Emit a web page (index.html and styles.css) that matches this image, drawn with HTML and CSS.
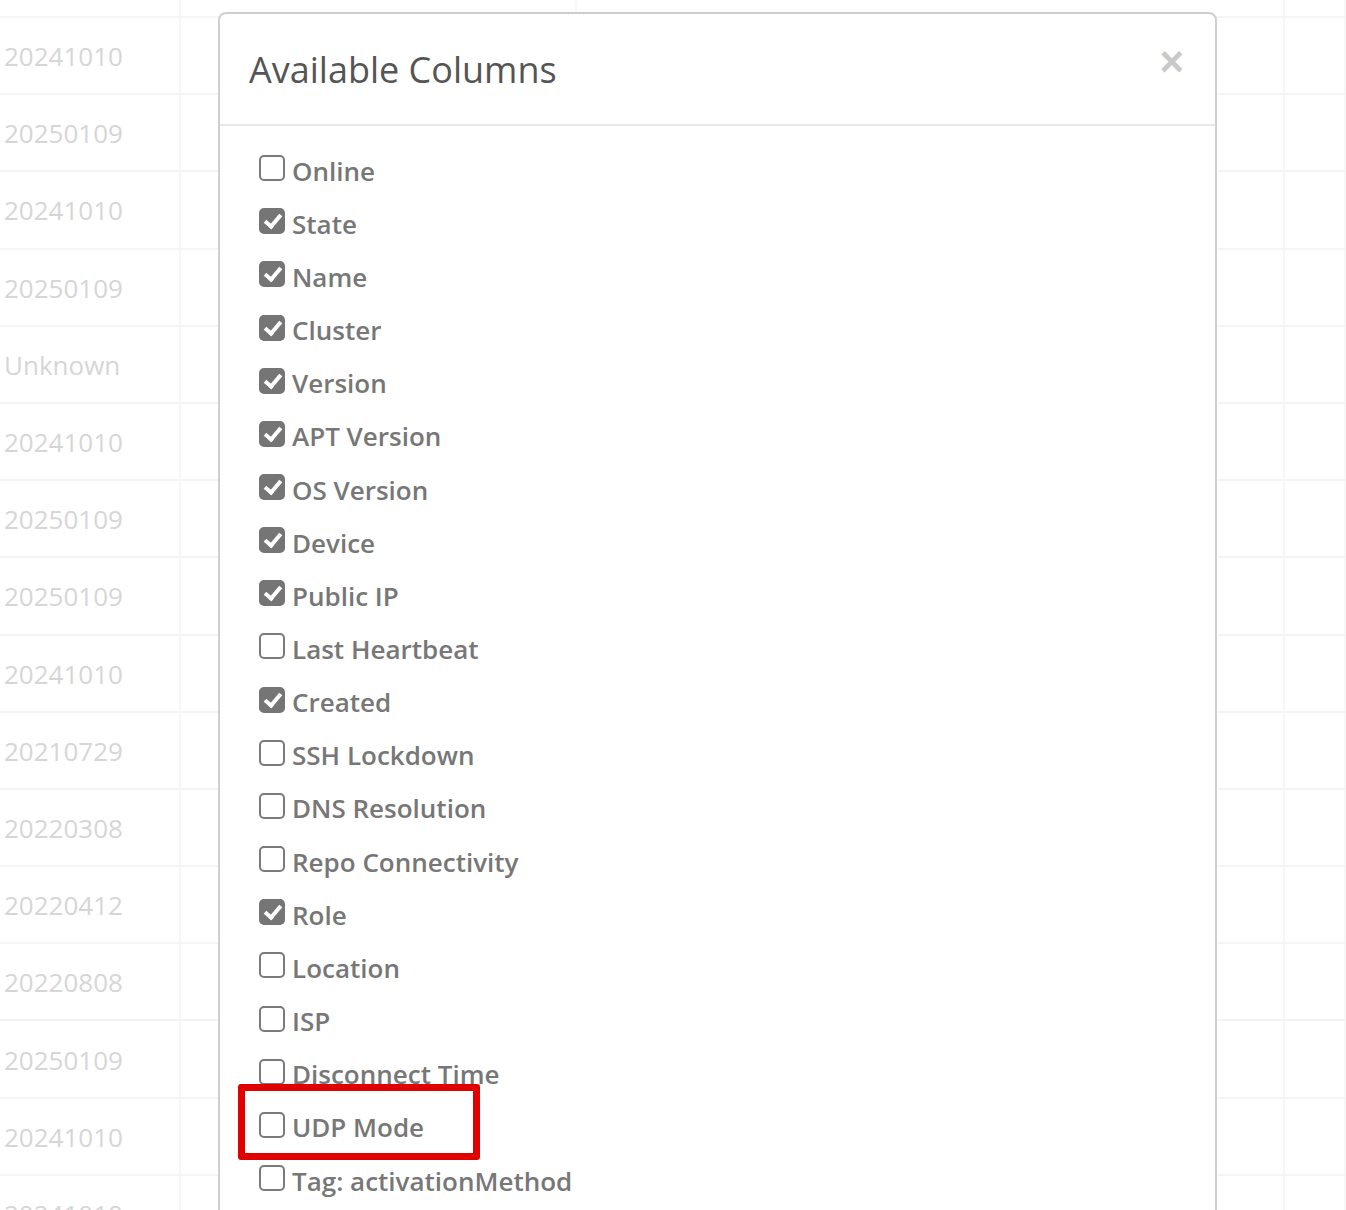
FILE: index.html
```html
<!DOCTYPE html>
<html>
<head>
<meta charset="utf-8">
<link rel="stylesheet" href="styles.css">
</head>
<body>
<div class="page">
  <div class="grid">
    <div class="row top"><div class="c1"></div><div class="c2"></div><div class="c3"></div><div class="c4"></div></div>
    <div class="row"><div class="c1">20241010</div><div class="c2"></div><div class="c3"></div><div class="c4"></div></div>
    <div class="row"><div class="c1">20250109</div><div class="c2"></div><div class="c3"></div><div class="c4"></div></div>
    <div class="row"><div class="c1">20241010</div><div class="c2"></div><div class="c3"></div><div class="c4"></div></div>
    <div class="row"><div class="c1">20250109</div><div class="c2"></div><div class="c3"></div><div class="c4"></div></div>
    <div class="row"><div class="c1">Unknown</div><div class="c2"></div><div class="c3"></div><div class="c4"></div></div>
    <div class="row"><div class="c1">20241010</div><div class="c2"></div><div class="c3"></div><div class="c4"></div></div>
    <div class="row"><div class="c1">20250109</div><div class="c2"></div><div class="c3"></div><div class="c4"></div></div>
    <div class="row"><div class="c1">20250109</div><div class="c2"></div><div class="c3"></div><div class="c4"></div></div>
    <div class="row"><div class="c1">20241010</div><div class="c2"></div><div class="c3"></div><div class="c4"></div></div>
    <div class="row"><div class="c1">20210729</div><div class="c2"></div><div class="c3"></div><div class="c4"></div></div>
    <div class="row"><div class="c1">20220308</div><div class="c2"></div><div class="c3"></div><div class="c4"></div></div>
    <div class="row"><div class="c1">20220412</div><div class="c2"></div><div class="c3"></div><div class="c4"></div></div>
    <div class="row"><div class="c1">20220808</div><div class="c2"></div><div class="c3"></div><div class="c4"></div></div>
    <div class="row"><div class="c1">20250109</div><div class="c2"></div><div class="c3"></div><div class="c4"></div></div>
    <div class="row"><div class="c1">20241010</div><div class="c2"></div><div class="c3"></div><div class="c4"></div></div>
    <div class="row"><div class="c1">20241010</div><div class="c2"></div><div class="c3"></div><div class="c4"></div></div>
  </div>

  <div class="modal">
    <div class="modal-header">
      <h4 class="modal-title">Available Columns</h4>
      <span class="close">&times;</span>
    </div>
    <div class="modal-body">
      <label class="opt"><span class="box"></span>Online</label>
      <label class="opt"><span class="box on"></span>State</label>
      <label class="opt"><span class="box on"></span>Name</label>
      <label class="opt"><span class="box on"></span>Cluster</label>
      <label class="opt"><span class="box on"></span>Version</label>
      <label class="opt"><span class="box on"></span>APT Version</label>
      <label class="opt"><span class="box on"></span>OS Version</label>
      <label class="opt"><span class="box on"></span>Device</label>
      <label class="opt"><span class="box on"></span>Public IP</label>
      <label class="opt"><span class="box"></span>Last Heartbeat</label>
      <label class="opt"><span class="box on"></span>Created</label>
      <label class="opt"><span class="box"></span>SSH Lockdown</label>
      <label class="opt"><span class="box"></span>DNS Resolution</label>
      <label class="opt"><span class="box"></span>Repo Connectivity</label>
      <label class="opt"><span class="box on"></span>Role</label>
      <label class="opt"><span class="box"></span>Location</label>
      <label class="opt"><span class="box"></span>ISP</label>
      <label class="opt"><span class="box"></span>Disconnect Time</label>
      <label class="opt"><span class="box"></span>UDP Mode</label>
      <label class="opt"><span class="box"></span>Tag: activationMethod</label>
    </div>
  </div>
  <div class="highlight"></div>
</div>
</body>
</html>
```

FILE: styles.css
```css
html, body {
  margin: 0;
  padding: 0;
  background: #fff;
  overflow: hidden;
}
body {
  width: 1346px;
  height: 1210px;
  font-family: "Open Sans", "Liberation Sans", sans-serif;
}
.page {
  position: relative;
  width: 1346px;
  height: 1210px;
  overflow: hidden;
}
.grid {
  display: flex;
  flex-direction: column;
}
.row {
  display: grid;
  grid-template-columns: 181px 396px 708px 61px;
  height: 75.2px;
  border-bottom: 2px solid #f4f4f4;
}
.row.top {
  height: 16px;
}
.row > div {
  border-right: 2px solid #f7f7f7;
  font-size: 26px;
  color: #d6d6d6;
  display: flex;
  align-items: center;
  padding-left: 4px;
  padding-top: 1px;
}
.modal {
  position: absolute;
  left: 218px;
  top: 12px;
  width: 995px;
  height: 1300px;
  background: #fff;
  border: 2px solid #cfcfcf;
  border-radius: 8px;
}
.modal-header {
  height: 112px;
  border-bottom: 2px solid #e8e8e8;
  display: flex;
  align-items: center;
  justify-content: space-between;
  padding: 0 31px 0 29px;
  box-sizing: border-box;
}
.modal-title {
  margin: 0;
  font-size: 36px;
  font-weight: 400;
  color: #555;
  padding-top: 0;
}
.close {
  font-family: "Liberation Sans", Arial, sans-serif;
  font-weight: bold;
  font-size: 42px;
  line-height: 1;
  color: #c9c9c9;
  margin-top: -14px;
}
.modal-body {
  padding: 18px 0 0 39px;
  display: flex;
  flex-direction: column;
}
.opt {
  display: flex;
  align-items: center;
  height: 53.16px;
  font-size: 26px;
  font-weight: 600;
  color: #777;
  white-space: nowrap;
}
.box {
  width: 22px;
  height: 22px;
  border: 2px solid #7a7a7a;
  border-radius: 5px;
  margin-right: 7px;
  margin-top: -5px;
  position: relative;
  flex: none;
}
.box.on {
  background: #757575;
  border-color: #757575;
}
.box.on::after {
  content: "";
  position: absolute;
  left: 7px;
  top: 1px;
  width: 6px;
  height: 13px;
  border-right: 4px solid #fff;
  border-bottom: 4px solid #fff;
  transform: rotate(40deg);
}
.highlight {
  position: absolute;
  left: 238px;
  top: 1084px;
  width: 228px;
  height: 62px;
  border: 7px solid #e00000;
  border-radius: 3px;
}
```
